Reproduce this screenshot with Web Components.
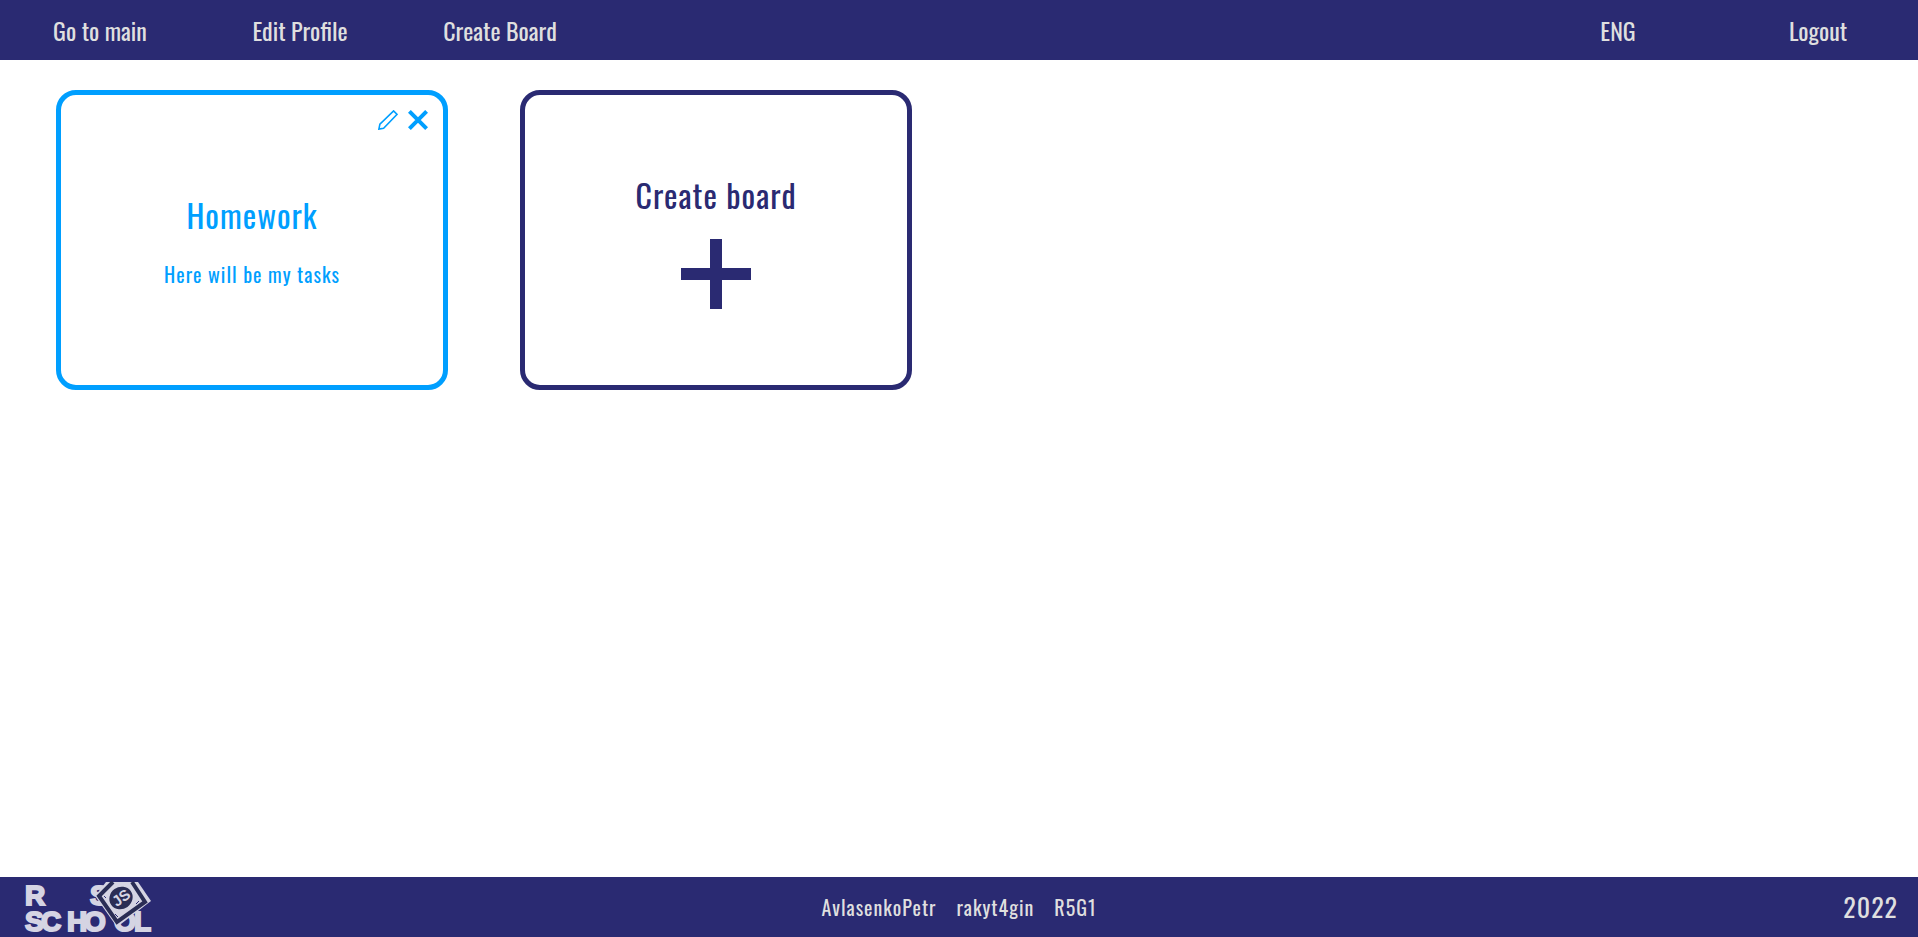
<!DOCTYPE html>
<html lang="en">
<head>
<meta charset="utf-8">
<title>Boards</title>
<style>
  body {
    margin: 0;
    font-family: Oswald, "Liberation Sans Narrow", "Roboto Condensed", "Liberation Sans", sans-serif;
    --navy: #2a2a72;
    --blue: #009fff;
    --light: #dfdfdf;
  }
</style>
</head>
<body>
<boards-page></boards-page>
<script>
const define = (name, html) => {
  const template = document.createElement('template');
  template.innerHTML = html;
  customElements.define(name, class extends HTMLElement {
    constructor() {
      super();
      this.attachShadow({ mode: 'open' }).append(template.content.cloneNode(true));
    }
  });
};

define('school-logo', `
<style>
  :host { display: block; height: 52px; padding-left: 4px; letter-spacing: normal; }
  a, svg { display: block; width: 128px; }
  svg { overflow: visible; }
  text { font: bold 28px "Liberation Sans", sans-serif; fill: #d5d4e3; stroke: #d5d4e3; stroke-width: 2; }
  .js { font-size: 15px; stroke-width: 0; }
</style>
<a href="#school" aria-label="RS School">
<svg width="128" height="52" viewBox="0 0 128 52">
  <text x="1" y="24">R</text><text x="66" y="24">S</text>
  <text y="50"><tspan x="1">S</tspan><tspan x="17">C</tspan><tspan x="43">H</tspan><tspan x="60">O</tspan><tspan x="90">O</tspan><tspan x="110">L</tspan></text>
  <g>
    <path d="M82 1H114L127 20L93 46L71 15Z" fill="#d5d4e3"/>
    <path d="M89 1L75 15L93 41L121 21L108 1" fill="none" stroke="#2a2d55" stroke-width="4"/>
    <path d="M80 15l2 2M91 33l3 3M112 23l3-3" stroke="#2a2a72" stroke-width="1"/>
    <ellipse cx="97" cy="17" rx="12" ry="11" fill="#2a2d55" transform="rotate(-36 97 17)"/>
    <text class="js" x="88" y="22" transform="rotate(-36 97 17)">JS</text>
  </g>
</svg></a>`);

define('app-header', `
<style>
  :host { display: block; background: var(--navy); }
  nav { display: flex; justify-content: space-between; height: 60px; }
  div { display: flex; }
  ::slotted(*) { width: 200px; display: flex; align-items: center; justify-content: center;
    padding: 0; border: 0; background: none; font: inherit; font-size: 24px; line-height: 36px;
    color: var(--light); text-decoration: none; }
</style>
<nav><div><slot></slot></div><div><slot name="end"></slot></div></nav>`);

define('app-footer', `
<style>
  :host { display: block; background: var(--navy); color: var(--light); letter-spacing: 1px; }
  footer { display: grid; grid-template-columns: 1fr auto 1fr; align-items: center; height: 60px; padding: 0 20px; }
  div { display: flex; gap: 20px; font-size: 20px; line-height: 30px; }
  a { color: inherit; text-decoration: none; }
  span { justify-self: end; font-size: 26px; line-height: 40px; }
</style>
<footer>
  <school-logo></school-logo>
  <div><a href="#a">AvlasenkoPetr</a><a href="#r">rakyt4gin</a><a href="#t">R5G1</a></div>
  <span>2022</span>
</footer>`);

define('board-card', `
<style>
  :host { display: block; color: var(--blue); letter-spacing: 1px; }
  article { position: relative; box-sizing: border-box; height: 300px; border: 5px solid; border-radius: 20px;
    display: flex; flex-direction: column; align-items: center; justify-content: center; gap: 20px; }
  h2, p { margin: 0; font-weight: 400; }
  h2 { font-size: 32px; line-height: 48px; }
  p { font-size: 20px; line-height: 30px; }
  .tools { position: absolute; top: 15px; right: 15px; display: flex; gap: 10px; }
  button { padding: 0; border: 0; background: none; color: inherit; }
  svg { display: block; }
</style>
<article>
  <div class="tools">
    <button aria-label="Edit board"><svg width="20" height="20" viewBox="0 0 20 20" fill="none" stroke="currentColor" stroke-width="1.6"><path d="M.9 19.1L1.9 14.2L15.6.9L19.1 4.4L5.6 18.2Z"/></svg></button>
    <button aria-label="Delete board"><svg width="20" height="20" viewBox="0 0 20 20" stroke="currentColor" stroke-width="4"><path d="M1.4 1.4L18.6 18.6M18.6 1.4L1.4 18.6"/></svg></button>
  </div>
  <h2><slot name="title"></slot></h2>
  <p><slot></slot></p>
</article>`);

define('create-card', `
<style>
  :host { display: block; }
  button { box-sizing: border-box; width: 100%; height: 300px; border: 5px solid; border-radius: 20px; padding: 0; background: none;
    color: var(--navy); font: inherit; font-size: 32px; line-height: 48px; letter-spacing: 1px;
    display: flex; flex-direction: column; align-items: center; justify-content: center; gap: 20px; }
</style>
<button><slot></slot>
<svg width="70" height="70" viewBox="0 0 70 70" fill="currentColor"><path d="M29 0H41V29H70V41H41V70H29V41H0V29H29Z"/></svg>
</button>`);

define('boards-page', `
<style>
  :host { display: flex; flex-direction: column; min-height: 100vh; background: #fff; }
  main { flex: 1; display: grid; grid-template-columns: repeat(4, 1fr); gap: 72px; align-content: start; padding: 30px 78px 30px 56px; }
</style>
<app-header>
  <a href="#main">Go to main</a><a href="#profile">Edit Profile</a><button>Create Board</button>
  <button slot="end">ENG</button><button slot="end">Logout</button>
</app-header>
<main>
  <board-card><span slot="title">Homework</span>Here will be my tasks</board-card>
  <create-card>Create board</create-card>
</main>
<app-footer></app-footer>`);
</script>
</body>
</html>
